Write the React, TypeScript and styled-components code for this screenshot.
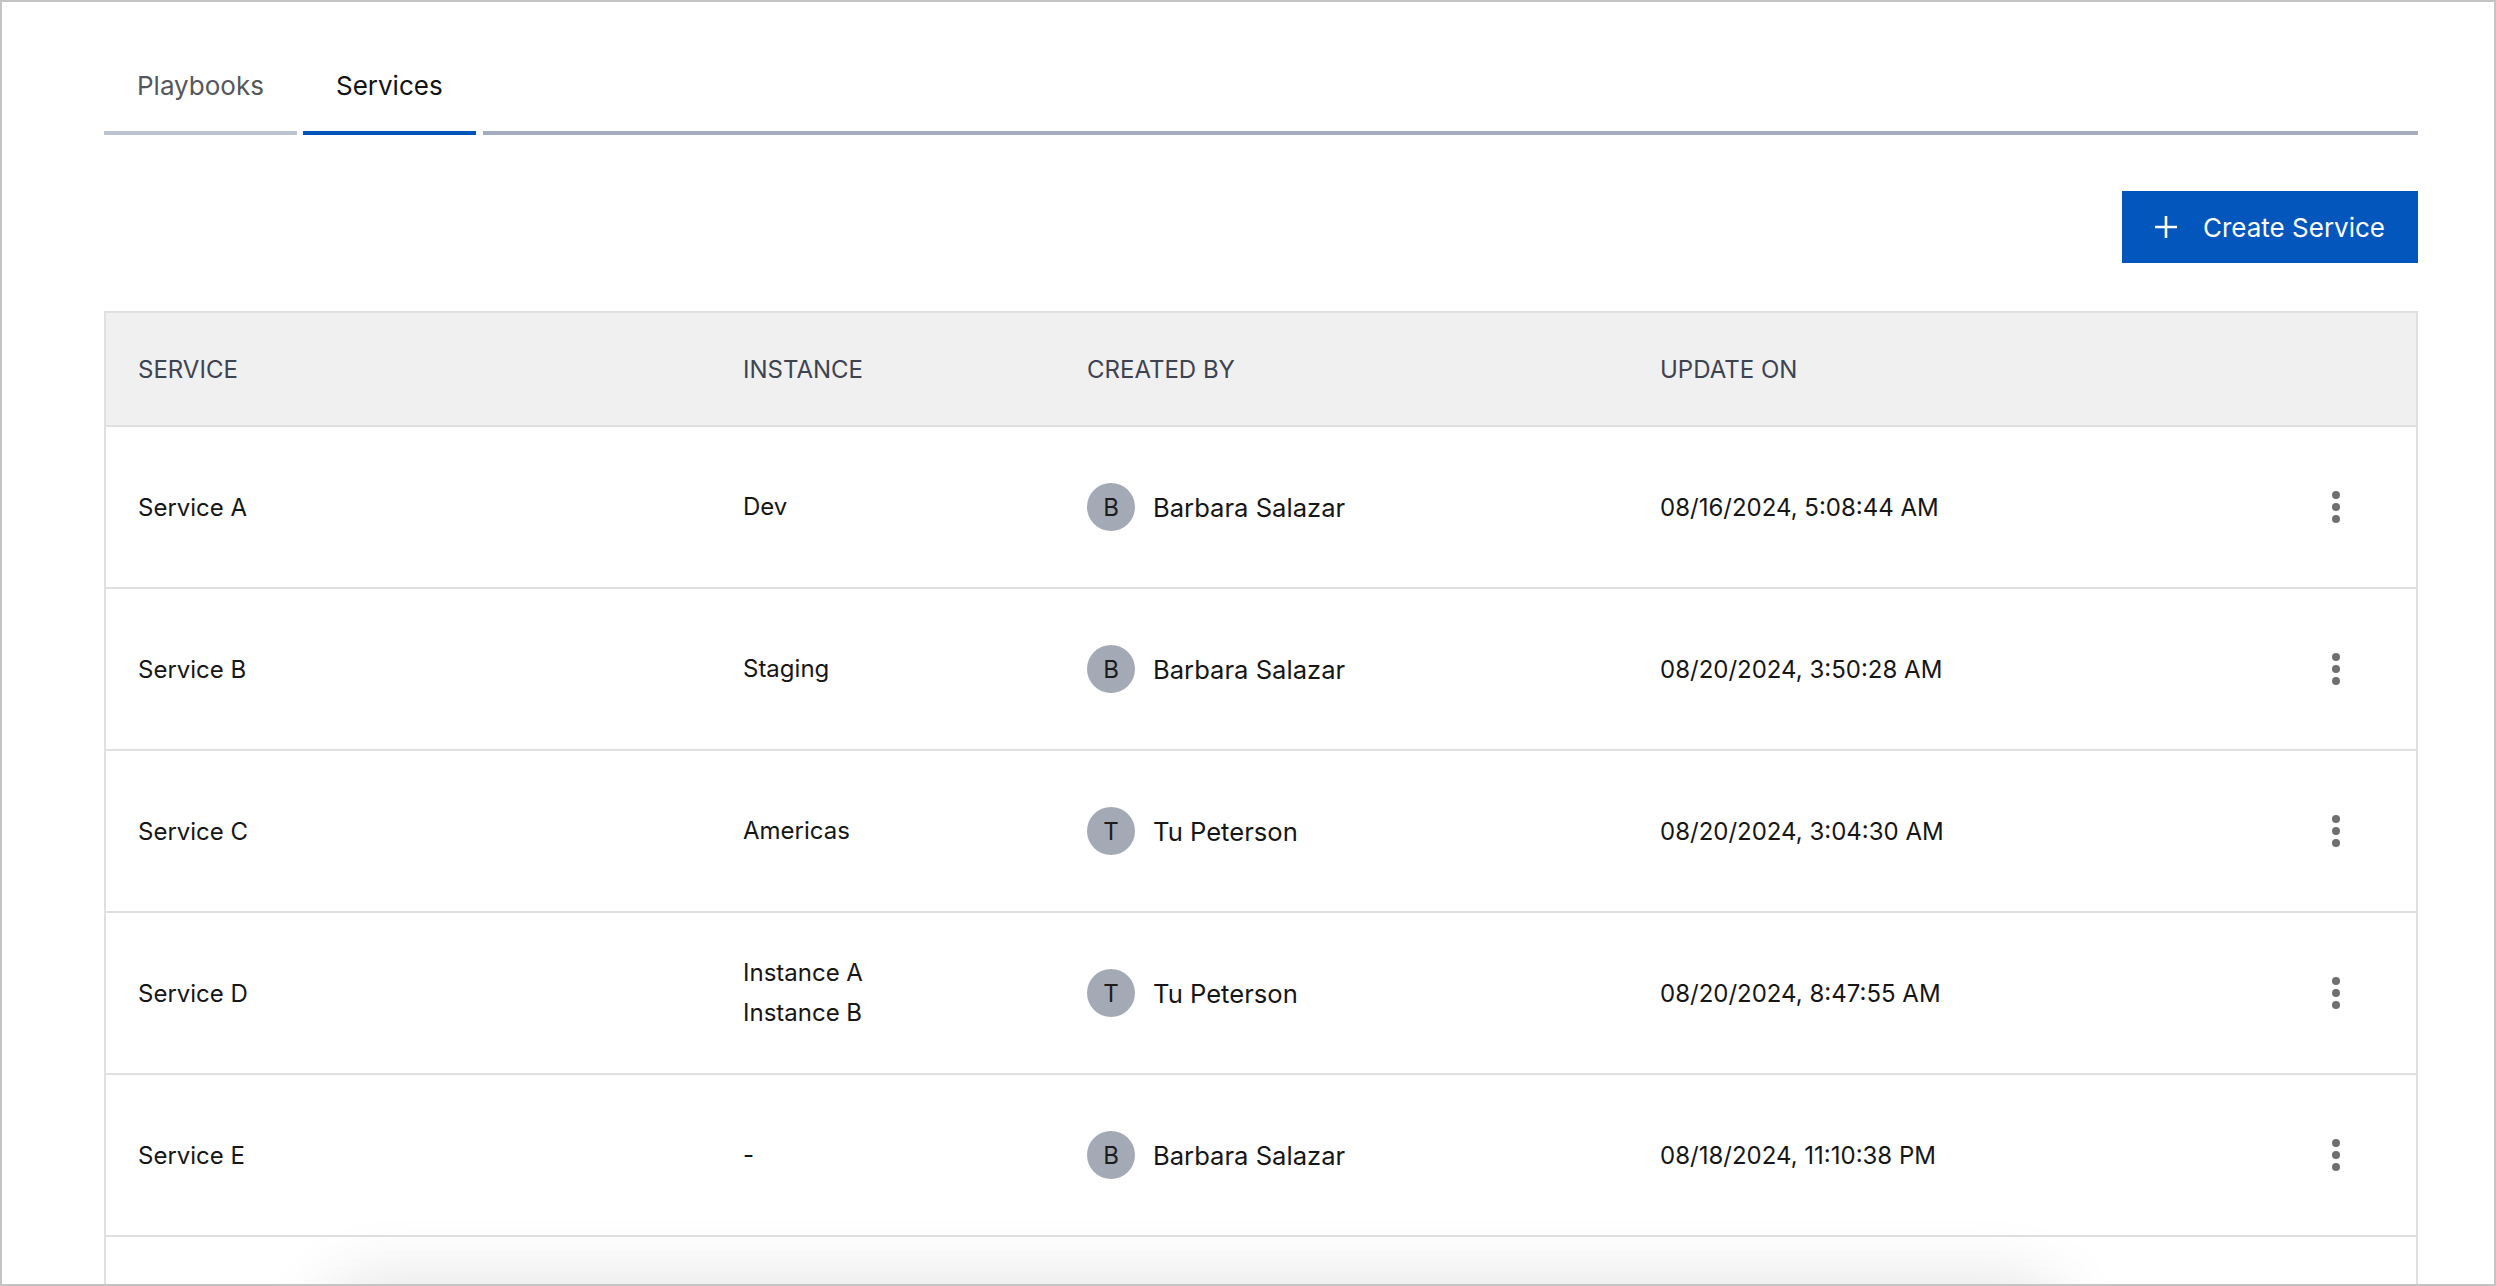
import React from 'react';
import styled, { createGlobalStyle } from 'styled-components';

type Service = {
  name: string;
  instances: string[];
  author: string;
  updated: string;
};

const services: Service[] = [
  { name: 'Service A', instances: ['Dev'], author: 'Barbara Salazar', updated: '08/16/2024, 5:08:44 AM' },
  { name: 'Service B', instances: ['Staging'], author: 'Barbara Salazar', updated: '08/20/2024, 3:50:28 AM' },
  { name: 'Service C', instances: ['Americas'], author: 'Tu Peterson', updated: '08/20/2024, 3:04:30 AM' },
  { name: 'Service D', instances: ['Instance A', 'Instance B'], author: 'Tu Peterson', updated: '08/20/2024, 8:47:55 AM' },
  { name: 'Service E', instances: ['-'], author: 'Barbara Salazar', updated: '08/18/2024, 11:10:38 PM' },
];

const GlobalStyle = createGlobalStyle`
  html, body {
    margin: 0;
    padding: 0;
    background: #ffffff;
  }
  body {
    font-family: Inter, "Noto Sans", "Liberation Sans", sans-serif;
    color: #161616;
  }
  * {
    box-sizing: border-box;
  }
`;

const PlusIcon = () => (
  <svg width="24" height="24" viewBox="0 0 24 24" fill="none">
    <path d="M12 1v22M1 12h22" stroke="#ffffff" strokeWidth="2.6" />
  </svg>
);

const KebabIcon = () => (
  <svg width="8" height="32" viewBox="0 0 8 32" fill="#6f6f6f">
    <circle cx="4" cy="4" r="4" />
    <circle cx="4" cy="16" r="4" />
    <circle cx="4" cy="28" r="4" />
  </svg>
);

const App = () => {
  return (
    <>
      <GlobalStyle />
      <Frame>
        <TabBar>
          <Tab>Playbooks</Tab>
          <Tab active>Services</Tab>
          <TabRest />
        </TabBar>
        <Toolbar>
          <PrimaryButton>
            <PlusIcon />
            Create Service
          </PrimaryButton>
        </Toolbar>
        <Table>
          <HeadRow>
            <HeadCell>Service</HeadCell>
            <HeadCell>Instance</HeadCell>
            <HeadCell>Created by</HeadCell>
            <HeadCell>Update on</HeadCell>
            <HeadCell />
          </HeadRow>
          {services.map(s => (
            <Row key={s.name}>
              <Cell>{s.name}</Cell>
              <Cell>
                <InstanceList>
                  {s.instances.map(i => (
                    <span key={i}>{i}</span>
                  ))}
                </InstanceList>
              </Cell>
              <Cell>
                <Avatar>{s.author[0]}</Avatar>
                <AuthorName>{s.author}</AuthorName>
              </Cell>
              <Cell>{s.updated}</Cell>
              <ActionCell>
                <MenuButton aria-label="More actions">
                  <KebabIcon />
                </MenuButton>
              </ActionCell>
            </Row>
          ))}
          {/* next page of rows continues below the fold */}
          <Row />
        </Table>
        <FloatingShadow />
      </Frame>
    </>
  );
};

const Frame = styled.div`
  position: relative;
  height: 1286px;
  overflow: hidden;
  border: 2px solid #c4c4c4;
  padding: 68px 76px 0 102px;
  background: #ffffff;
`;

const TabBar = styled.div`
  display: flex;
  align-items: flex-end;
  gap: 6px;
`;

type TabProps = {
  active?: boolean;
};

const Tab = styled.div<TabProps>`
  padding: 0 33px 29px;
  font-size: 26px;
  line-height: 32px;
  font-weight: 400;
  color: ${props => (props.active ? '#121212' : '#55575b')};
  border-bottom: 4px solid ${props => (props.active ? '#0055b8' : '#bcc5cf')};
  white-space: nowrap;
`;

const TabRest = styled.div`
  flex: 1;
  margin-left: 1px;
  border-bottom: 4px solid #a3adbd;
`;

const Toolbar = styled.div`
  display: flex;
  justify-content: flex-end;
  margin-top: 56px;
`;

const PrimaryButton = styled.button`
  display: flex;
  align-items: center;
  gap: 25px;
  height: 72px;
  padding: 0 33px 0 32px;
  border: none;
  border-radius: 0;
  background: #0356bc;
  color: #ffffff;
  font-family: Inter, "Noto Sans", "Liberation Sans", sans-serif;
  font-size: 26px;
  font-weight: 400;
  cursor: pointer;
`;

const Table = styled.div`
  margin-top: 48px;
  border: 2px solid #e0e0e0;
  border-bottom: none;
`;

const columns = '605px 344px 573px 1fr 160px';

const HeadRow = styled.div`
  display: grid;
  grid-template-columns: ${columns};
  height: 114px;
  background: #f0f0f0;
  border-bottom: 2px solid #e0e0e0;
`;

const HeadCell = styled.div`
  display: flex;
  align-items: center;
  padding-left: 32px;
  font-size: 24px;
  font-weight: 400;
  color: #3d4350;
  text-transform: uppercase;
`;

const Row = styled.div`
  display: grid;
  grid-template-columns: ${columns};
  height: 162px;
  border-bottom: 2px solid #e0e0e0;
`;

const Cell = styled.div`
  display: flex;
  align-items: center;
  padding-left: 32px;
  font-size: 24px;
  color: #161616;
`;

const InstanceList = styled.div`
  display: flex;
  flex-direction: column;
  line-height: 40px;
`;

const Avatar = styled.span`
  display: flex;
  align-items: center;
  justify-content: center;
  width: 48px;
  height: 48px;
  border-radius: 50%;
  background: #a3a9b5;
  color: #1c1c1c;
  font-size: 24px;
  margin-right: 18px;
`;

const AuthorName = styled.span`
  font-size: 25.6px;
`;

const ActionCell = styled.div`
  display: flex;
  align-items: center;
  justify-content: center;
`;

const MenuButton = styled.button`
  display: flex;
  align-items: center;
  justify-content: center;
  width: 48px;
  height: 48px;
  padding: 0;
  border: none;
  background: transparent;
  cursor: pointer;
`;

const FloatingShadow = styled.div`
  position: absolute;
  left: 330px;
  right: 440px;
  bottom: -90px;
  height: 80px;
  border-radius: 40px;
  background: #ffffff;
  box-shadow: 0 0 70px 12px rgba(0, 0, 0, 0.12);
`;

export default App;
